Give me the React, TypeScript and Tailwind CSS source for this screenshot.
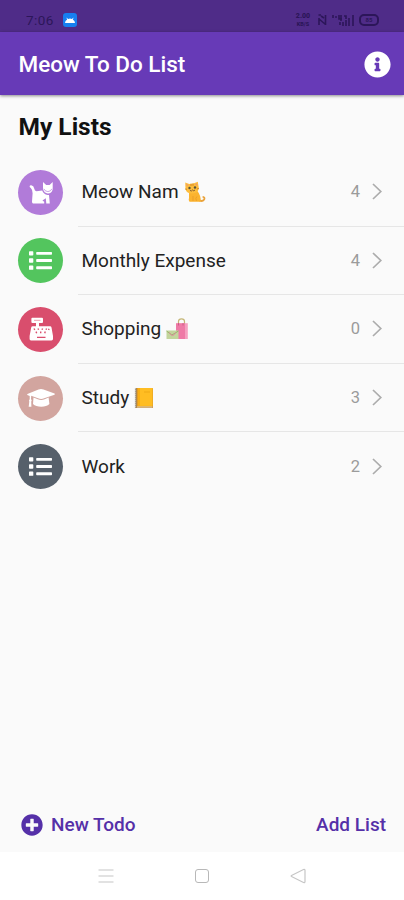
import type { ReactNode } from "react";
import clsx from "clsx";
import { FaInfoCircle, FaList, FaPlusCircle } from "react-icons/fa";

type TodoList = {
  id: number;
  title: string;
  count: number;
  color: string;
  icon: ReactNode;
  emoji?: ReactNode;
};

const CatIcon = () => (
  <svg className="h-6 w-6" viewBox="0 0 24 24" fill="currentColor">
    <path d="M0.6 6.6 Q0.7 5.2 2.2 5.3 Q4.8 5.7 5.2 8.6 Q5.6 11.2 7.5 11.2 L13.2 10.6 Q14.6 14.6 18.6 15 L20 15 L20.8 23.4 H17.3 L16.8 18.2 L13.4 20.6 L15.2 21.7 V23.4 H3.9 Q3 23.2 3 21.8 L3.6 13.2 Q3.4 9.2 1.8 7.9 Q0.6 7.6 0.6 6.6Z" />
    <path d="M14 2 L17.2 5 H20.6 L23.7 2 V9.2 Q22.6 13.6 18.8 13.5 Q15.1 13.2 14 9Z" />
    <path d="M14.8 8.8 Q16 11.5 18.9 11.6 Q21.9 11.4 22.9 8.8" fill="none" stroke="#b17bd9" strokeWidth="0.7" />
  </svg>
);

const RegisterIcon = () => (
  <svg className="h-6 w-6" viewBox="0 0 24 24" fill="currentColor">
    <path d="M3.3 0.8 H13 Q14 0.8 14 1.8 V5 Q14 6 13 6 H10 V9.2 H21 Q22.3 9.2 22.5 10.5 L24 19 V22 Q24 23.4 22.5 23.4 H2 Q0.6 23.4 0.6 22 V19 L2.2 10.5 Q2.4 9.2 3.8 9.2 H7 V6 H3.3 Q2.4 6 2.4 5 V1.8 Q2.4 0.8 3.3 0.8Z" />
    <path
      d="M8 20.4 H16.5 M5 11.5 L5.8 12.8 M9 11.5 L9.6 12.8 M13 12.8 L13.6 11.5 M17 12.8 L17.6 11.5 M7 14.6 L7.7 16.2 M11.7 14.6 V16.2 M15.7 16.2 L16.3 14.6 M19.6 13 L20 11.7"
      fill="none"
      stroke="#d94e6d"
      strokeWidth="1.4"
    />
    <path d="M5 3.3 H11.5" stroke="#ef9fb0" strokeWidth="1" />
  </svg>
);

const CapIcon = () => (
  <svg className="h-6 w-7" viewBox="-2 0 28 24" fill="currentColor">
    <path d="M-1.6 8 L9.5 3.4 Q12 2.5 14.5 3.4 L25.5 7.4 Q26.2 8 25.5 8.7 L15.2 12.2 Q12.2 13.6 9 12.2 L2.2 9.8 L2 13.2 Q3.2 14.3 2.2 15.5 L2.4 20.8 H-0.3 L0.3 15.5 Q-0.4 14.2 0.7 13.2 V10 L-1.6 9 Q-2 8.6 -1.6 8Z" />
    <path d="M4.5 11.6 L8.8 13.3 Q12.2 14.8 15.6 13.3 L19.6 11.6 L20.4 18 Q17.5 20.8 12.3 20.8 Q6.8 20.8 4 18Z" />
  </svg>
);

const CatEmoji = () => (
  <svg className="h-[22px] w-[22px]" viewBox="0 0 22 22">
    <path d="M14 18.5 Q18 21.5 20.2 18.5 Q21 16.5 19.3 16" fill="none" stroke="#e9a23b" strokeWidth="1.8" strokeLinecap="round" />
    <path d="M5 10 L13 9.5 Q17.5 15 16.5 20.7 H5.5 Q4 20 5 17Z" fill="#fbb32f" />
    <path d="M1.2 1.5 L5.2 3 L10 2.3 L13.8 0.8 L14.8 7 Q14.5 12 8.5 12.5 Q2 12.7 1.5 7.5Z" fill="#fdbd3c" />
    <path d="M2.2 2.8 L4.6 4 L2.8 5.6Z M12.9 2 L11 3.5 L13.4 4.8Z" fill="#ee9870" />
    <path d="M7 2.8 V5 M9 2.6 V4.8 M1 8 L3 8.3 M15 7.5 L12.8 8" stroke="#c97919" strokeWidth="0.8" />
    <circle cx="5.5" cy="7" r="1.2" fill="#54513c" />
    <circle cx="11" cy="6.5" r="1.2" fill="#54513c" />
    <path d="M6 9.4 Q7.5 10.8 8.5 9 Q9.8 10.6 11 9" fill="none" stroke="#7a5531" strokeWidth="0.9" />
    <path d="M9 15 V20 M13 15.5 Q11 17 12.5 20" fill="none" stroke="#e69a28" strokeWidth="0.7" />
  </svg>
);

const BagsEmoji = () => (
  <svg className="h-[22px] w-[22px]" viewBox="0 0 22 22">
    <path d="M12.5 6 V3.5 Q12.5 0.8 15.5 0.8 Q18.5 0.8 18.5 3.5 V6" fill="none" stroke="#c5b676" strokeWidth="1.2" />
    <path d="M10 5.2 H19 V21 H10Z" fill="#ee7aa6" />
    <path d="M19 5.2 H21.8 V21 H19Z" fill="#f5a0c0" />
    <path d="M12.5 7.5 V5 M17 7.5 V5" stroke="#c6527f" strokeWidth="0.8" />
    <path d="M0.5 12.5 H12.5 V21 H0.5Z" fill="#c3d59c" />
    <path d="M0.5 13 L6 17 L12.5 13" fill="none" stroke="#97b468" />
    <path d="M3.2 14.5 Q6.5 20.5 9.8 14.5" fill="none" stroke="#e58ba4" strokeWidth="1" />
  </svg>
);

const BookEmoji = () => (
  <svg className="h-[22px] w-[20px]" viewBox="0 0 20 22">
    <path d="M2 1 H18 Q19 1 19 2 V21 H2Z" fill="#c88b38" />
    <path d="M3.5 1 H18.5 V19.5 H3.5Z" fill="#f9ae14" />
    <path d="M6 1 H18.5 V18.8 H6Z" fill="#ffbd22" />
    <path d="M3 20 H18.5" stroke="#dfd3b6" strokeWidth="1" />
    <path d="M1.8 1.5 V21" stroke="#8d8370" strokeWidth="1.8" strokeDasharray="1.2 0.8" />
    <path d="M10 5 H16" stroke="#f5b01a" strokeWidth="1.5" />
  </svg>
);

const lists: TodoList[] = [
  { id: 1, title: "Meow Nam", count: 4, color: "bg-[#b17bd9]", icon: <CatIcon />, emoji: <CatEmoji /> },
  { id: 2, title: "Monthly Expense", count: 4, color: "bg-[#53c55e]", icon: <FaList className="h-[23px] w-[23px]" /> },
  { id: 3, title: "Shopping", count: 0, color: "bg-[#d94e6d]", icon: <RegisterIcon />, emoji: <BagsEmoji /> },
  { id: 4, title: "Study", count: 3, color: "bg-[#d2a59f]", icon: <CapIcon />, emoji: <BookEmoji /> },
  { id: 5, title: "Work", count: 2, color: "bg-[#56606b]", icon: <FaList className="h-[23px] w-[23px]" /> },
];

const StatusBar = () => (
  <div className="flex h-8 items-center bg-[#4f2c88] pt-2 pr-[25px] pl-[26px] text-[#2c1659]">
    <span className="text-[13.5px] leading-4 tracking-[0.4px]">7:06</span>
    <span className="ml-[9px] flex h-[14px] w-[14px] items-center justify-center rounded-[3px] bg-[#177ff0]">
      <svg className="h-[7px] w-[10px]" viewBox="0 0 10 7">
        <path d="M0 6 Q0 3.8 2.2 2.5 L1.3 0.6 L3.2 2 Q5 1 6.8 2 L8.7 0.6 L7.8 2.5 Q10 3.8 10 6Z" fill="#fff" />
      </svg>
    </span>
    <div className="ml-auto flex items-center">
      <span className="flex w-[18px] flex-col items-center font-black">
        <span className="text-[7px] leading-[9px]">2.00</span>
        <span className="text-[5.5px] leading-[7px]">KB/S</span>
      </span>
      <svg className="ml-[6px] h-3 w-[9px]" viewBox="0 0 9 12" fill="none" stroke="currentColor" strokeWidth="1.6">
        <path d="M0.5 1 H3 M1 4 V11 M1 5 L7 10 M7.5 1 V11 M3 2 L6 4" />
      </svg>
      <svg className="ml-[5px] h-3 w-[22px]" viewBox="0 0 22 12" fill="none" stroke="currentColor" strokeWidth="1.6">
        <path d="M1 1 V4 M3 3 H5 M7 1 V5 H10 M9 1 V7 M12 2 H14 V5 M8 8 V11 M11 8 V12 M14 6 V12 M17 4 V12 M21 1 V12" />
      </svg>
      <span className="ml-[5px] flex h-[12px] w-[20px] items-center justify-center rounded-[5px] border-2 border-current text-[6px] leading-none font-bold">
        85
      </span>
    </div>
  </div>
);

const ListItem = ({ title, count, color, icon, emoji, last }: TodoList & { last: boolean }) => (
  <li className="flex h-[68.6px] cursor-pointer pl-[18px]">
    <div className="flex w-[60px] items-center">
      <span className={clsx("flex h-[45px] w-[45px] items-center justify-center rounded-full text-white", color)}>
        {icon}
      </span>
    </div>
    <div className={clsx("flex flex-1 items-center pr-[22px] pl-[3.5px]", !last && "border-b border-[#e6e6e6]")}>
      <span className="pt-px text-[19px] text-[#222]">{title}</span>
      {emoji && <span className="ml-[5px]">{emoji}</span>}
      <span className="ml-auto pt-px text-[16.5px] text-[#9b9b9b]">{count}</span>
      <svg className="ml-[12px] h-[17px] w-[10px]" viewBox="0 0 10 17" fill="none" stroke="#acacac" strokeWidth="1.7">
        <path d="M1 1 L8.8 8.5 L1 16" />
      </svg>
    </div>
  </li>
);

const NavBar = () => (
  <nav className="flex h-12 items-center bg-white text-[#c6c6c6]">
    <svg className="ml-[98px] h-4 w-4" viewBox="0 0 16 16" fill="none" stroke="currentColor" strokeWidth="1.2">
      <path d="M0.5 2 H15.5 M0.5 8 H15.5 M0.5 14 H15.5" />
    </svg>
    <span className="ml-[81px] h-[14px] w-[14px] rounded-[3px] border border-[#b8b8b8]" />
    <svg className="ml-[81px] h-4 w-4" viewBox="0 0 16 16" fill="none" stroke="currentColor" strokeWidth="1.2" strokeLinejoin="round">
      <path d="M13.5 1.5 Q15 1 15 2.5 V13.5 Q15 15 13.5 14.5 L1.5 8.5 Q0.8 8 1.5 7.5Z" />
    </svg>
  </nav>
);

const App = () => {
  return (
    <div className="flex h-[900px] w-full flex-col bg-[#fafafa] font-['Roboto',sans-serif]">
      <StatusBar />
      <header className="flex h-[63px] items-center justify-between bg-[#673ab7] pt-[2px] pr-[13px] pl-[18.5px] text-white shadow-[0_1px_3px_rgba(0,0,0,0.45)]">
        <h1 className="text-[22.5px] font-medium">Meow To Do List</h1>
        <FaInfoCircle className="h-[27px] w-[27px]" />
      </header>
      <main className="flex-1">
        <h2 className="flex h-[63px] items-center pt-[2px] pl-[18.5px] text-[24.5px] font-bold text-[#111]">My Lists</h2>
        <ul>
          {lists.map((item, index) => (
            <ListItem key={item.id} {...item} last={index === lists.length - 1} />
          ))}
        </ul>
      </main>
      <footer className="flex h-[54px] items-center justify-between pr-[18px] pl-[21px] text-[19px] font-medium text-[#5530a8]">
        <button className="flex items-center gap-2">
          <FaPlusCircle className="h-[22px] w-[22px]" />
          New Todo
        </button>
        <button>Add List</button>
      </footer>
      <NavBar />
    </div>
  );
};

export default App;
